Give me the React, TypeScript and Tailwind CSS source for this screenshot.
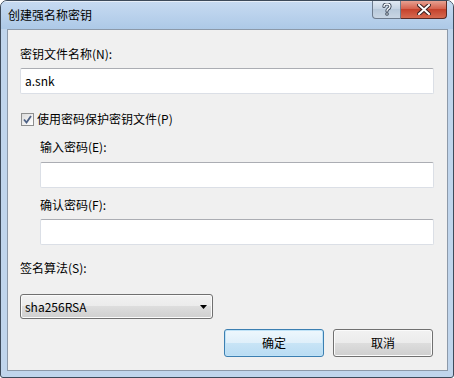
import React from 'react';

const font = { fontFamily: '"Segoe UI", "Noto Sans CJK SC", "Noto Sans", sans-serif' };

const TextBox = ({ value }: { value?: string }) => (
  <div className="h-[26px] rounded-[2px] border border-[#dbdfe6] border-t-[#abadb3] bg-white flex items-center pl-[4px] text-[12px] text-black">
    {value}
  </div>
);

const Button = ({ label, primary }: { label: string; primary?: boolean }) => (
  <div
    className={
      'w-[100px] h-[28px] rounded-[3px] border flex items-center justify-center text-[12px] text-black ' +
      (primary
        ? 'border-[#3c7fb1] bg-[linear-gradient(#eef7fd_0%,#dfeffa_50%,#c8e4f6_50%,#b9dcf3_100%)] shadow-[inset_0_0_0_1px_#bfe2f7]'
        : 'border-[#707070] bg-[linear-gradient(#f2f2f2_0%,#ebebeb_50%,#dddddd_50%,#cfcfcf_100%)] shadow-[inset_0_0_0_1px_#fbfbfb]')
    }
  >
    {label}
  </div>
);

export default function App() {
  return (
    <div className="w-[454px] h-[378px] bg-white" style={font}>
      <div className="w-[454px] h-[378px] rounded-t-[7px] rounded-b-[3px] border border-[#3d4a5a] bg-[#c0d5ec] flex flex-col overflow-hidden">
        {/* title bar */}
        <div className="h-[28px] shrink-0 flex items-start bg-[linear-gradient(#c6daf1,#adc9e7)] border-t border-[#e6eef8]">
          <div className="ml-[7px] mt-[4px] text-[12px] leading-[18px] text-black">创建强名称密钥</div>
          <div className="ml-auto mr-[6px] -mt-[2px] flex">
            <div className="w-[29px] h-[19px] rounded-bl-[4px] border border-t-0 border-[#6d7b8d] bg-[linear-gradient(#e4ecf5,#c5d3e3_50%,#b7c8da_50%,#c9d6e4)] flex items-center justify-center">
              <svg width="10" height="13" viewBox="0 0 10 13">
                <path
                  d="M2 3.5 Q2 1 5 1 Q8 1 8 3.5 Q8 5 6 6 Q5 6.6 5 8"
                  fill="none"
                  stroke="#3a4657"
                  strokeWidth="3.2"
                  strokeLinecap="round"
                />
                <circle cx="5" cy="11" r="1.8" fill="#3a4657" />
                <path
                  d="M2 3.5 Q2 1 5 1 Q8 1 8 3.5 Q8 5 6 6 Q5 6.6 5 8"
                  fill="none"
                  stroke="#f6f8fb"
                  strokeWidth="1.4"
                  strokeLinecap="round"
                />
                <circle cx="5" cy="11" r="0.8" fill="#f6f8fb" />
              </svg>
            </div>
            <div className="w-[46px] h-[19px] rounded-br-[4px] border border-t-0 border-l-0 border-[#5a2a25] bg-[linear-gradient(#e9a99a,#d5604c_50%,#c4402a_50%,#d66a50)] flex items-center justify-center">
              <svg width="14" height="11" viewBox="0 0 14 11">
                <path d="M2 1 L12 10 M12 1 L2 10" stroke="#3b2020" strokeWidth="4" strokeLinecap="square" />
                <path d="M2 1 L12 10 M12 1 L2 10" stroke="#ffffff" strokeWidth="2" strokeLinecap="square" />
              </svg>
            </div>
          </div>
        </div>

        {/* content */}
        <div className="ml-[6px] mr-[5px] h-[342px] shrink-0 border border-[#8c99a9] bg-[#f0f0f0] pl-[12px] pr-[13px] flex flex-col">
          <div className="mt-[16px] h-[16px] leading-[16px] text-[12px] text-black">密钥文件名称(N):</div>
          <div className="mt-[6px]">
            <TextBox value="a.snk" />
          </div>

          <div className="mt-[17px] h-[16px] flex items-center">
            <div className="ml-px w-[13px] h-[13px] border border-[#8e8f8f] bg-[linear-gradient(135deg,#dcdcdc,#ffffff)] flex items-center justify-center">
              <svg width="9" height="9" viewBox="0 0 9 9">
                <path d="M1 4.5 L3.5 7.5 L8 1" fill="none" stroke="#4d6185" strokeWidth="1.8" />
              </svg>
            </div>
            <span className="ml-[3px] text-[12px] leading-[16px] text-black">使用密码保护密钥文件(P)</span>
          </div>

          <div className="pl-[20px] flex flex-col">
            <div className="mt-[12px] h-[16px] leading-[16px] text-[12px] text-black">输入密码(E):</div>
            <div className="mt-[7px]">
              <TextBox />
            </div>
            <div className="mt-[9px] h-[16px] leading-[16px] text-[12px] text-black">确认密码(F):</div>
            <div className="mt-[6px]">
              <TextBox />
            </div>
          </div>

          <div className="mt-[15px] h-[16px] leading-[16px] text-[12px] text-black">签名算法(S):</div>
          <div className="mt-[18px] w-[193px] h-[25px] rounded-[3px] border border-[#707070] bg-[linear-gradient(#f2f2f2_0%,#ebebeb_50%,#dddddd_50%,#cfcfcf_100%)] shadow-[inset_0_0_0_1px_#fbfbfb] flex items-center pl-[4px] pr-[5px]">
            <span className="text-[12px] text-black">sha256RSA</span>
            <svg className="ml-auto" width="7" height="4" viewBox="0 0 7 4">
              <path d="M0 0 L7 0 L3.5 4 Z" fill="#000" />
            </svg>
          </div>

          <div className="mt-[10px] mr-px flex justify-end gap-[9px]">
            <Button label="确定" primary />
            <Button label="取消" />
          </div>
        </div>
      </div>
    </div>
  );
}
